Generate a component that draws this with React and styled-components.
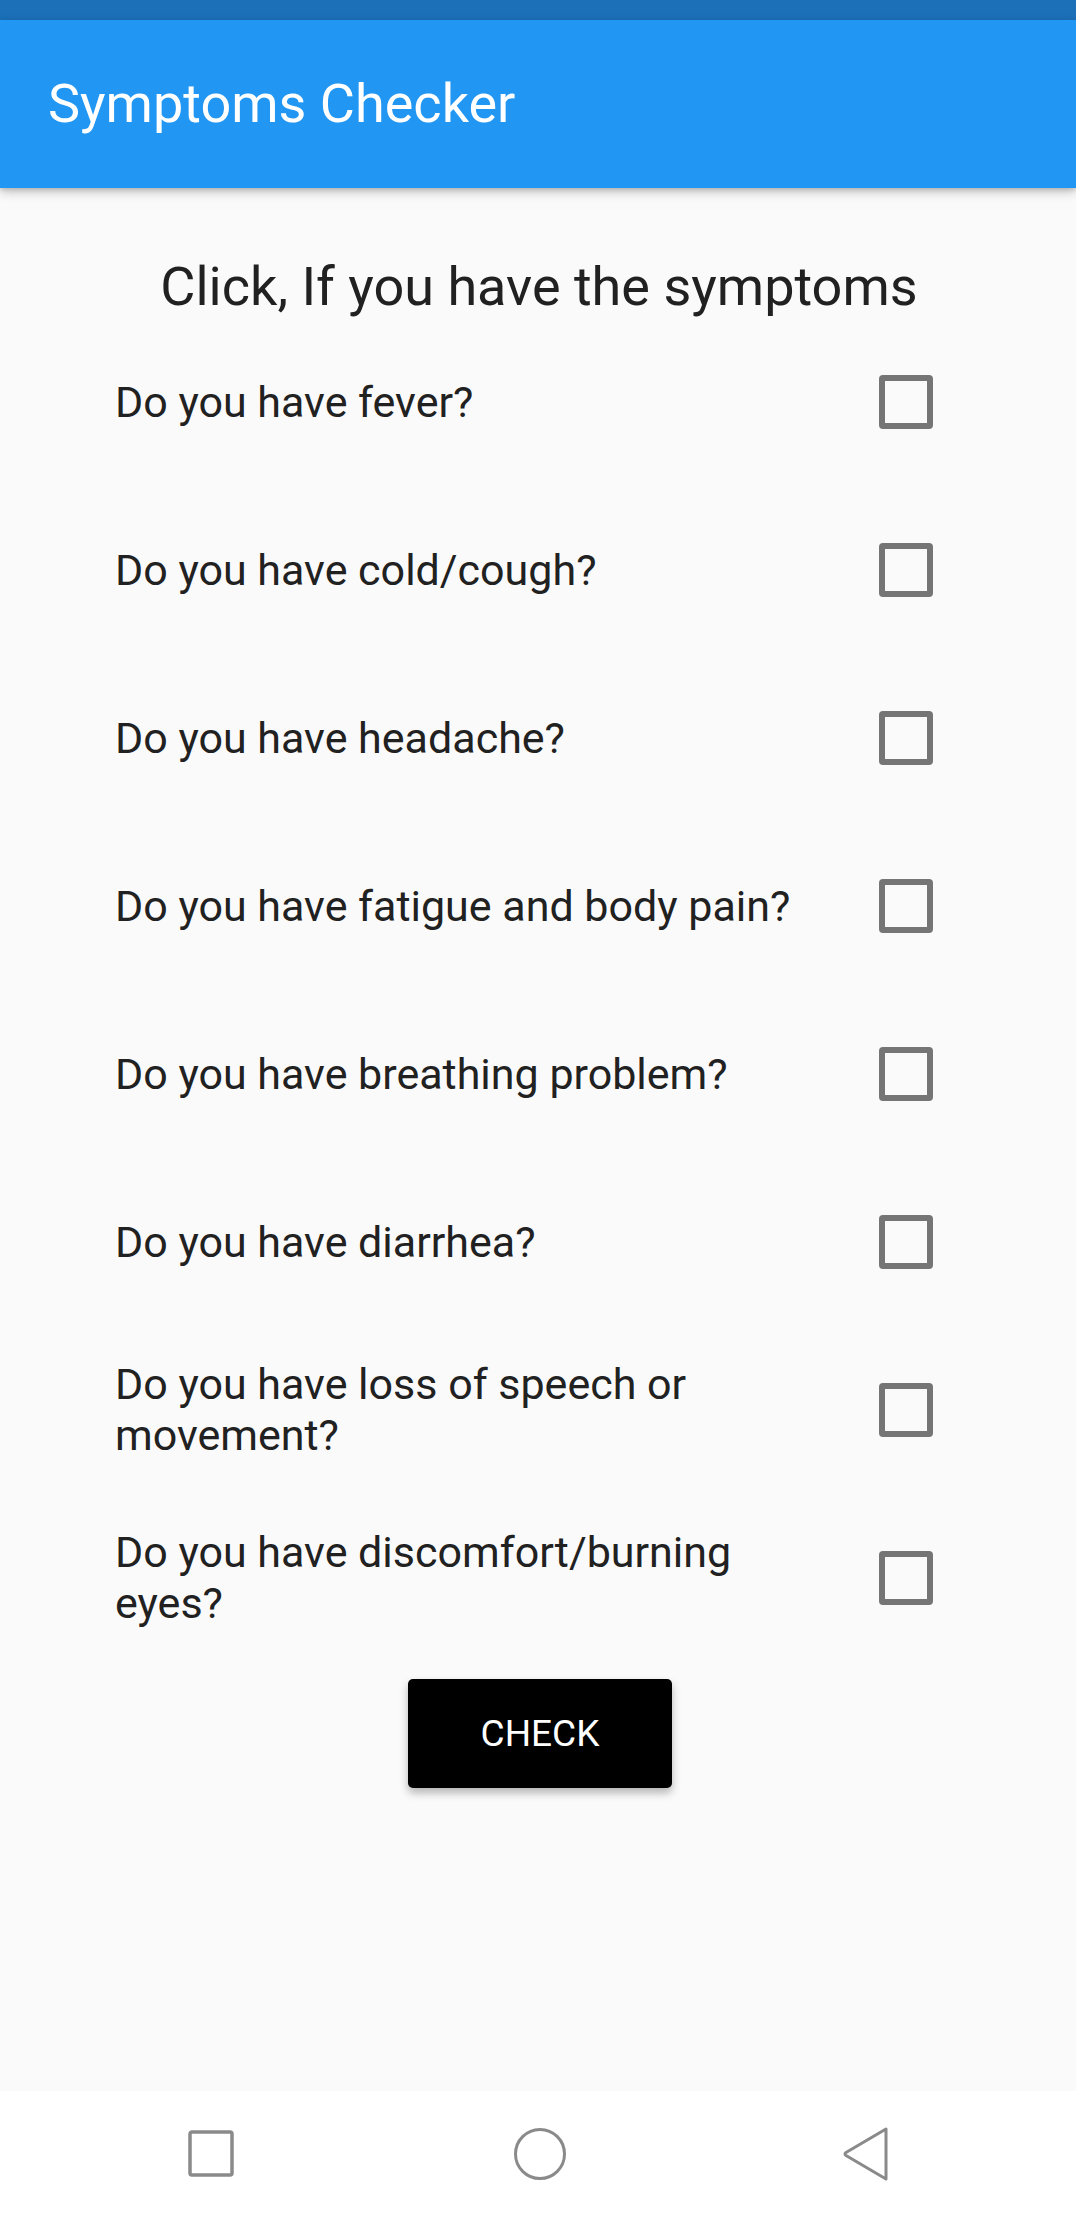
import React, { useState } from "react";
import styled, { createGlobalStyle } from "styled-components";

const GlobalStyle = createGlobalStyle`
  html, body {
    margin: 0;
    padding: 0;
    background: #fafafa;
  }
  body {
    font-family: "Roboto", "Liberation Sans", sans-serif;
    -webkit-font-smoothing: antialiased;
  }
`;

const Screen = styled.div`
  display: flex;
  flex-direction: column;
  width: 1076px;
  height: 2216px;
  background: #fafafa;
  overflow: hidden;
`;

const StatusBar = styled.div`
  height: 20px;
  background: #1b70b8;
  flex-shrink: 0;
`;

const AppBar = styled.header`
  position: relative;
  z-index: 2;
  display: flex;
  align-items: center;
  height: 168px;
  padding: 0 48px;
  flex-shrink: 0;
  background: #2196f3;
  box-shadow: 0 4px 10px rgba(0, 0, 0, 0.22), 0 2px 4px rgba(0, 0, 0, 0.12);
`;

const Title = styled.h1`
  margin: 0;
  color: #ffffff;
  font-size: 54px;
  font-weight: 400;
  line-height: 1;
`;

const Content = styled.main`
  display: flex;
  flex-direction: column;
  flex: 1;
`;

const Heading = styled.h2`
  margin: 67px 0 0 2px;
  text-align: center;
  color: #212121;
  font-size: 54px;
  font-weight: 400;
  line-height: 63px;
`;

const Row = styled.label`
  display: flex;
  align-items: center;
  height: 168px;
  padding: 0 143px 0 115px;
  cursor: pointer;
`;

const Question = styled.span`
  width: 705px;
  color: #212121;
  font-size: 43px;
  line-height: 51px;
`;

const Box = styled.span`
  box-sizing: border-box;
  display: flex;
  align-items: center;
  justify-content: center;
  width: 54px;
  height: 54px;
  margin-left: auto;
  border: ${(p) => (p.checked ? "none" : "6px solid #757575")};
  border-radius: 4px;
  background: ${(p) => (p.checked ? "#2196f3" : "transparent")};
`;

const CheckButton = styled.button`
  align-self: center;
  width: 264px;
  height: 109px;
  margin: 17px 0 0 4px;
  border: none;
  border-radius: 5px;
  background: #000000;
  color: #ffffff;
  font-family: "Roboto", "Liberation Sans", sans-serif;
  font-size: 37px;
  font-weight: 400;
  box-shadow: 0 5px 9px rgba(0, 0, 0, 0.28);
  cursor: pointer;
`;

const NavBar = styled.nav`
  display: flex;
  align-items: center;
  height: 125px;
  flex-shrink: 0;
  background: #ffffff;
`;

const NavSlot = styled.div`
  display: flex;
  justify-content: center;
  width: 100px;
  margin-left: ${(p) => p.offset}px;
`;

const questions = [
  "Do you have fever?",
  "Do you have cold/cough?",
  "Do you have headache?",
  "Do you have fatigue and body pain?",
  "Do you have breathing problem?",
  "Do you have diarrhea?",
  "Do you have loss of speech or movement?",
  "Do you have discomfort/burning eyes?"
];

const Checkbox = ({ checked }) => (
  <Box checked={checked}>
    {checked && (
      <svg width="40" height="40" viewBox="0 0 24 24">
        <path d="M4 12.5l5 5L20 6.5" fill="none" stroke="#fff" strokeWidth="3" />
      </svg>
    )}
  </Box>
);

export default function App() {
  const [answers, setAnswers] = useState(questions.map(() => false));

  const toggle = (i) =>
    setAnswers((prev) => prev.map((v, idx) => (idx === i ? !v : v)));

  return (
    <>
      <GlobalStyle />
      <Screen>
        <StatusBar />
        <AppBar>
          <Title>Symptoms Checker</Title>
        </AppBar>
        <Content>
          <Heading>Click, If you have the symptoms</Heading>
          {questions.map((q, i) => (
            <Row key={q} onClick={() => toggle(i)}>
              <Question>{q}</Question>
              <Checkbox checked={answers[i]} />
            </Row>
          ))}
          <CheckButton>CHECK</CheckButton>
        </Content>
        <NavBar>
          <NavSlot offset={161}>
            <svg width="48" height="48" viewBox="0 0 48 48">
              <rect x="3" y="2" width="42" height="43" rx="2" fill="none" stroke="#8a8a8a" strokeWidth="3.5" />
            </svg>
          </NavSlot>
          <NavSlot offset={229}>
            <svg width="54" height="54" viewBox="0 0 54 54">
              <circle cx="27" cy="27" r="24.5" fill="none" stroke="#8a8a8a" strokeWidth="3" />
            </svg>
          </NavSlot>
          <NavSlot offset={226}>
            <svg width="48" height="54" viewBox="0 0 48 54">
              <path d="M44 2 L44 52 L4 28.5 Q2 27 4 25.5 Z" fill="none" stroke="#8a8a8a" strokeWidth="3" strokeLinejoin="round" />
            </svg>
          </NavSlot>
        </NavBar>
      </Screen>
    </>
  );
}
